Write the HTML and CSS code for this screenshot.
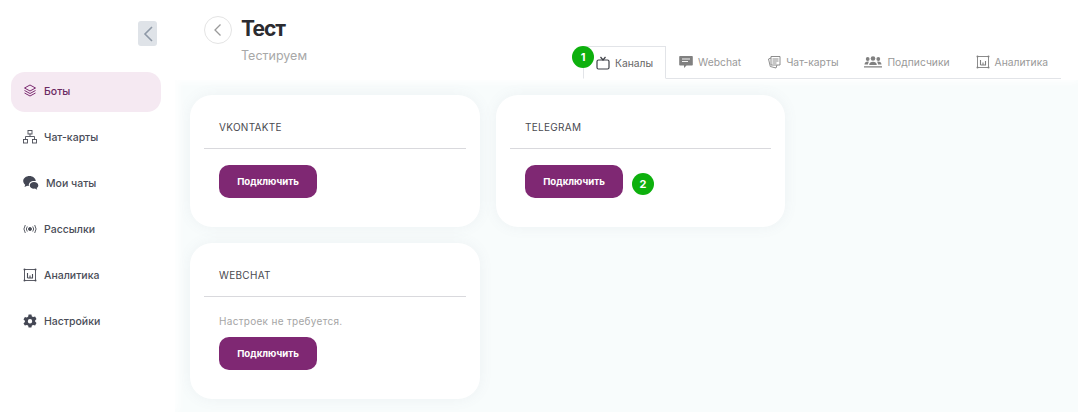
FILE: index.html
```html
<!DOCTYPE html>
<html lang="ru">
<head>
  <meta charset="UTF-8" />
  <meta name="viewport" content="width=device-width, initial-scale=1.0" />
  <title>Тест</title>
  <link rel="stylesheet" href="styles.css">
</head>
<body>
  <div class="app">
    <aside class="sidebar">
      <div class="toggle-row">
        <button class="toggle" type="button">
          <svg width="12" height="18" viewBox="0 0 12 18"><path d="M10 2 3 9l7 7" fill="none" stroke="#8e98a6" stroke-width="1.600"/></svg>
        </button>
      </div>
      <nav class="menu">
        <a class="menu-item active">
          <svg class="menu-icon" viewBox="0 0 14 14" fill="none" stroke="#7b2a70" stroke-width="1"><path d="M7 1 1.500 4 7 7l5.500-3z"/><path d="M1.500 6.500 7 9.500l5.500-3"/><path d="M1.500 9 7 12l5.500-3"/></svg>
          Боты
        </a>
        <a class="menu-item">
          <svg class="menu-icon" viewBox="0 0 14 14" fill="none" stroke="#4a4d57" stroke-width=".9"><rect x="5" y=".5" width="4" height="3.500"/><rect x=".5" y="9.500" width="4" height="3.500"/><rect x="9.500" y="9.500" width="4" height="3.500"/><path d="M7 3.500v3M2.500 9.500v-3h9v3"/></svg>
          Чат-карты
        </a>
        <a class="menu-item">
          <svg class="menu-icon wide" viewBox="0 0 16 14" fill="#444754"><path d="M6.500 0C3 0 .2 2.200.2 5c0 1.500.8 2.800 2 3.700L1.500 11l2.800-1.300c.5.100 1 .2 1.500.2C5.500 7 7.800 5 11 5h1.800C12.600 2.200 9.800 0 6.500 0z"/><path d="M11 6c-2.400 0-4.200 1.500-4.200 3.400s1.800 3.300 4.200 3.300l.9-.1 2.300 1.100-.5-1.800c1-.6 1.600-1.500 1.600-2.500C15.300 7.500 13.400 6 11 6z"/></svg>
          Мои чаты
        </a>
        <a class="menu-item">
          <svg class="menu-icon" viewBox="0 0 14 14" fill="none" stroke="#4a4d57" stroke-width=".9"><circle cx="7" cy="7" r="1.500" fill="#4a4d57"/><path d="M4.300 4.500a4 4 0 0 0 0 5M9.700 4.500a4 4 0 0 1 0 5M2.300 3a7 7 0 0 0 0 8M11.700 3a7 7 0 0 1 0 8"/></svg>
          Рассылки
        </a>
        <a class="menu-item">
          <svg class="menu-icon" viewBox="0 0 14 14" fill="none" stroke="#4a4d57" stroke-width=".9"><rect x="1.500" y="1.500" width="11" height="11"/><path d="M4.500 5v5M4.500 10h5.500M7 7.500V10M9.500 6v4" stroke-width="1.100"/><g fill="#4a4d57" stroke="none"><circle cx="1.500" cy="1.500" r="1"/><circle cx="12.500" cy="1.500" r="1"/><circle cx="1.500" cy="12.500" r="1"/><circle cx="12.500" cy="12.500" r="1"/></g></svg>
          Аналитика
        </a>
        <a class="menu-item">
          <svg class="menu-icon" viewBox="0 0 14 14"><path fill="#444754" fill-rule="evenodd" d="M5.600.5h2.800l.5 1.900 1.300.7 1.900-.5 1.400 2.400-1.400 1.400v1.200l1.400 1.400-1.400 2.400-1.900-.5-1.300.7-.5 1.900H5.600l-.5-1.900-1.300-.7-1.900.5L.5 9.400l1.400-1.400V6.800L.5 5.400 1.900 3l1.900.5 1.300-.7zM7 5a2.200 2.200 0 1 0 0 4.400A2.200 2.200 0 0 0 7 5z"/></svg>
          Настройки
        </a>
      </nav>
    </aside>

    <main class="main">
      <header class="header">
        <div class="heading">
          <button class="back" type="button">
            <svg width="10" height="14" viewBox="0 0 10 14"><path d="M7.500 1.500 2 7l5.500 5.500" fill="none" stroke="#9a9a9a" stroke-width="1.300"/></svg>
          </button>
          <div>
            <h1>Тест</h1>
            <p class="subtitle">Тестируем</p>
          </div>
        </div>
        <div class="tabs">
          <a class="tab active">
            <span class="badge badge-tab">1</span>
            <svg class="tab-icon" viewBox="0 0 14 14" fill="none" stroke="#3d3f46" stroke-width="1.200"><rect x="1" y="4" width="12" height="9" rx="1.500"/><path d="M4.500 1 7 4l2.500-3"/></svg>
            Каналы
          </a>
          <a class="tab">
            <svg class="tab-icon" viewBox="0 0 14 14"><path fill="#808080" d="M1 1h12a.8.800 0 0 1 .8.800v8a.8.800 0 0 1-.8.800H7.500L5 13v-2.400H1a.8.800 0 0 1-.8-.8v-8A.8.800 0 0 1 1 1z"/><path stroke="#fff" stroke-width=".9" d="M3 4h8M3 6.500h6"/></svg>
            Webchat
          </a>
          <a class="tab">
            <svg class="tab-icon" viewBox="0 0 14 14" fill="none" stroke="#808080" stroke-width=".9"><path d="M4 1.500h9v8.500H4z"/><path d="M4 3 1.500 4l1.800 7.500L9 13l1-3"/><path d="M5.500 4h6M5.500 6h6M5.500 8h4"/></svg>
            Чат-карты
          </a>
          <a class="tab">
            <svg class="tab-icon icon-group" viewBox="0 0 18 12" fill="#808080"><circle cx="3.700" cy="3" r="1.900"/><circle cx="9" cy="2.500" r="2.300"/><circle cx="14.300" cy="3" r="1.900"/><path d="M.5 8.500C.5 6.500 2 5.500 3.700 5.500l1.300.3C4.300 6.700 4 7.500 4 8.500zM5.200 9c0-2 1.800-3.200 3.800-3.200s3.800 1.200 3.800 3.200zM14 8.500c0-1-.3-1.800-1-2.700l1.300-.3c1.700 0 3.200 1 3.200 3zM0 10.300h18v1.200H0z"/></svg>
            Подписчики
          </a>
          <a class="tab">
            <svg class="tab-icon" viewBox="0 0 14 14" fill="none" stroke="#808080" stroke-width=".9"><rect x="1.500" y="1.500" width="11" height="11"/><path d="M4.500 5v5M4.500 10h5.500M7 7.500V10M9.500 6v4" stroke-width="1.100"/><g fill="#808080" stroke="none"><circle cx="1.500" cy="1.500" r="1"/><circle cx="12.500" cy="1.500" r="1"/><circle cx="1.500" cy="12.500" r="1"/><circle cx="12.500" cy="12.500" r="1"/></g></svg>
            Аналитика
          </a>
        </div>
      </header>

      <section class="cards">
        <div class="card">
          <div class="card-title">VKONTAKTE</div>
          <div class="card-body">
            <button class="connect" type="button">Подключить</button>
          </div>
        </div>
        <div class="card">
          <div class="card-title">TELEGRAM</div>
          <div class="card-body">
            <div class="connect-row">
              <button class="connect" type="button">Подключить</button>
              <span class="badge badge-btn">2</span>
            </div>
          </div>
        </div>
        <div class="card">
          <div class="card-title">WEBCHAT</div>
          <div class="card-body">
            <p class="note">Настроек не требуется.</p>
            <button class="connect" type="button">Подключить</button>
          </div>
        </div>
      </section>
    </main>
  </div>
</body>
</html>
```

FILE: styles.css
```css
* {
  box-sizing: border-box;
}
html, body {
  margin: 0;
  height: 100%;
  overflow: hidden;
}
body {
  font-family: "Inter", "Noto Sans", sans-serif;
  background: #fff;
  color: #444754;
}
.app {
  display: flex;
  height: 412px;
}
.sidebar {
  width: 175px;
  flex-shrink: 0;
  padding: 21px 14px 0 11px;
  background: #fff;
  box-shadow: 4px 0 8px rgba(255, 255, 255, 0.8);
  z-index: 1;
}
.toggle-row {
  display: flex;
  justify-content: flex-end;
  padding-right: 4px;
}
.toggle {
  width: 19px;
  height: 25px;
  padding: 0;
  border: none;
  border-radius: 3px;
  background: #dfe3e8;
  display: flex;
  align-items: center;
  justify-content: center;
}
.menu {
  margin-top: 26px;
  display: flex;
  flex-direction: column;
  gap: 6px;
}
.menu-item {
  height: 40px;
  padding: 0 0 2px 12px;
  display: flex;
  align-items: center;
  gap: 7px;
  border-radius: 14px;
  font-size: 10.500px;
  font-weight: 500;
  color: #4a4d57;
}
.menu-item.active {
  background: #f5e9f2;
  color: #6b2a63;
}
.menu-icon {
  width: 14px;
  height: 14px;
  flex-shrink: 0;
}
.menu-icon.wide {
  width: 16px;
}
.main {
  flex: 1;
  display: flex;
  flex-direction: column;
  background: #f8fcfc;
}
.header {
  height: 80px;
  padding: 16px 17px 0 29px;
  background: #fff;
  display: flex;
  justify-content: space-between;
  box-shadow: 0 3px 6px rgba(255, 255, 255, 0.8);
}
.heading {
  display: flex;
  gap: 9px;
}
.back {
  width: 28px;
  height: 28px;
  padding: 0;
  border: 1px solid #e4e4e4;
  border-radius: 50%;
  background: #fff;
  display: flex;
  align-items: center;
  justify-content: center;
}
h1 {
  margin: 0;
  font-size: 21px;
  line-height: 26px;
  font-weight: 700;
  letter-spacing: -1px;
  color: #2b2b30;
}
.subtitle {
  margin: 6px 0 0;
  font-size: 12.500px;
  line-height: 16px;
  color: #a8a8a8;
}
.tabs {
  align-self: flex-end;
  margin-bottom: 1px;
  display: flex;
  border-bottom: 1px solid #e2e4e8;
  height: 33px;
}
.tab {
  position: relative;
  display: flex;
  align-items: center;
  gap: 5px;
  padding: 0 13px;
  font-size: 10.300px;
  color: #999;
  white-space: nowrap;
}
.tab.active {
  height: 33px;
  padding: 0 12px;
  background: #fff;
  border: 1px solid #e2e4e8;
  border-bottom-color: #fff;
  color: #666;
}
.tab-icon {
  width: 14px;
  height: 14px;
}
.tab-icon.icon-group {
  width: 18px;
  height: 12px;
}
.badge {
  position: absolute;
  width: 22px;
  height: 22px;
  border-radius: 50%;
  background: #0db00d;
  color: #fff;
  font-size: 11px;
  font-weight: 700;
  display: flex;
  align-items: center;
  justify-content: center;
}
.badge-tab {
  left: -12px;
  top: -1px;
}
.connect-row {
  position: relative;
  width: 99px;
}
.badge-btn {
  left: 107px;
  top: 8px;
}
.cards {
  padding: 15px 0 0 15px;
  display: grid;
  grid-template-columns: 290px 289px;
  grid-auto-rows: min-content;
  gap: 16px;
}
.card {
  background: #fff;
  border-radius: 22px;
  padding: 0 14px;
  box-shadow: 0 0 14px rgba(100, 120, 140, 0.08);
}
.card-title {
  height: 54px;
  padding: 26px 0 0 15px;
  border-bottom: 1px solid #d9d9dd;
  font-size: 10px;
  line-height: 12px;
  letter-spacing: 0.3px;
  color: #4a4a50;
}
.card-body {
  padding: 16px 0 29px 15px;
}
.note {
  margin: 1px 0 9px;
  font-size: 10px;
  line-height: 14px;
  letter-spacing: 0.3px;
  color: #a5a5a5;
}
.connect {
  display: block;
  width: 98px;
  height: 33px;
  padding: 0;
  border: none;
  border-radius: 10px;
  background: #7f2873;
  color: #fff;
  font-family: inherit;
  font-size: 9.600px;
  font-weight: 700;
}
```
